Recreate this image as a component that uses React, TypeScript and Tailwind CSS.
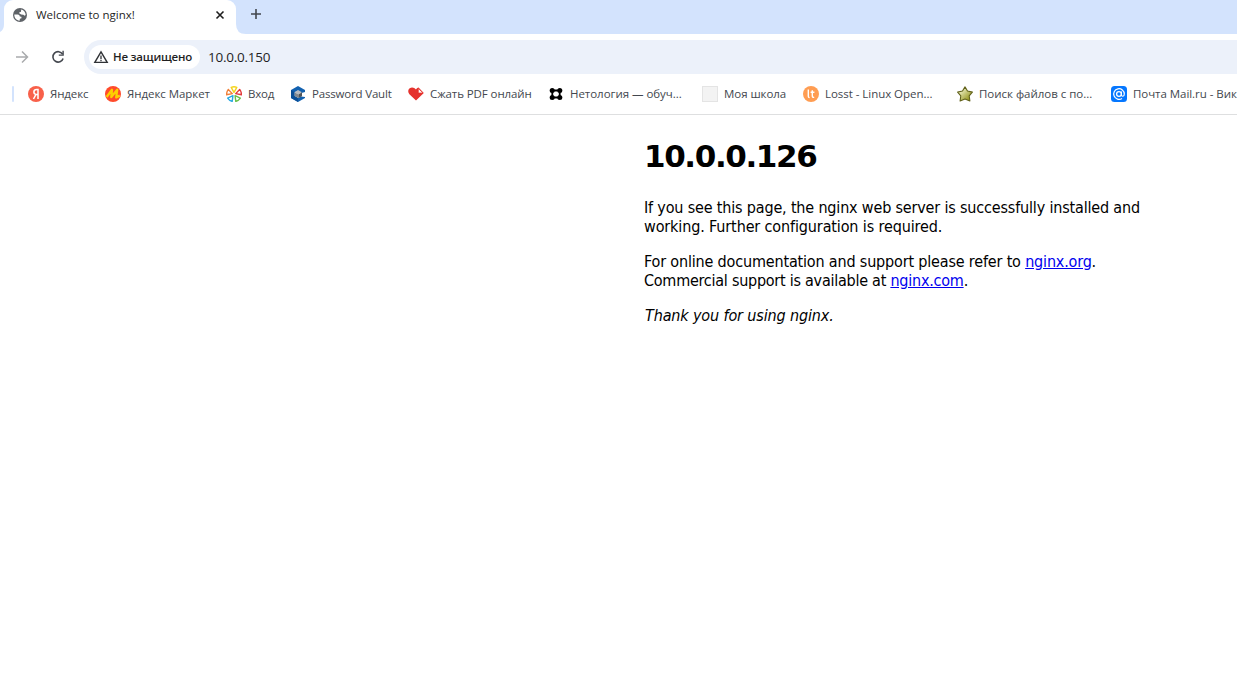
import type { ReactNode } from "react";

function GlobeIcon() {
  return (
    <svg viewBox="0 0 16 16" className="h-4 w-4 shrink-0">
      <circle cx="8" cy="8" r="7" fill="#5f6368" />
      <path d="M8.8 2.4 C11.6 2.7 13.6 5 13.7 8 L12.6 8.8 L11.4 7.7 L9.2 7.6 L7.4 6.6 L7.3 5.3 L8.8 4.9 L9.2 3.7 Z" fill="#fff" />
      <path d="M2.3 7.6 L5.6 7.6 C7 7.7 7.7 8.4 7.8 9.6 L9.4 9.8 L9.5 11.2 L7.9 11.7 L7.6 13.7 C4.4 13.6 2.2 11 2.3 7.6 Z" fill="#fff" />
    </svg>
  );
}

function YandexIcon() {
  return (
    <svg viewBox="0 0 16 16" className="h-4 w-4">
      <circle cx="8" cy="8" r="8" fill="#f8604a" />
      <path d="M10 13 V3.5 H8.6 C6.9 3.5 5.9 4.5 5.9 6 C5.9 7.4 6.7 8.2 8.2 8.4 H10 M8 8.4 L5.5 13" fill="none" stroke="#fff" strokeWidth="1.5" />
    </svg>
  );
}

function MarketIcon() {
  return (
    <svg viewBox="0 0 16 16" className="h-4 w-4">
      <circle cx="8" cy="8" r="8" fill="#ff4b2b" />
      <path d="M1.6 11 L7 3.8 L6.3 11 L12.2 3.8 L11.2 11.4 L14.8 9.6" fill="none" stroke="#fdd000" strokeWidth="2.3" strokeLinejoin="round" />
    </svg>
  );
}

const PETALS: [number, string][] = [
  [0, "#f5d31c"],
  [72, "#e23b3b"],
  [144, "#6cc04a"],
  [216, "#29a9e0"],
  [288, "#f0803a"],
];

function PetalsIcon() {
  return (
    <svg viewBox="0 0 16 16" className="h-4 w-4">
      {PETALS.map(([angle, color]) => (
        <path key={angle} d="M8 6.4 L5.2 1.3 Q8 0.3 10.8 1.3 Z" fill="none" stroke={color} strokeWidth="1.4" strokeLinejoin="round" transform={`rotate(${angle} 8 8.2)`} />
      ))}
    </svg>
  );
}

function VaultIcon() {
  return (
    <svg viewBox="0 0 16 16" className="h-4 w-4">
      <path d="M8 0 L15 4 V6 L11.5 7 L8 4.8 L4.5 6.3 V10 L8 12 L11 10.5 L15 11 V12 L8 16 L1 12 V4 Z" fill="#1261b0" />
      <path d="M1 4 L4.5 6.3 V10 L8 12 V16 L1 12 Z" fill="#0b4f96" />
      <path d="M8 4 L12 6.2 L8.4 8.4 L4.6 6.2 Z" fill="#b5bac0" />
      <path d="M4.6 6.2 L8.4 8.4 V12 L4.6 10 Z" fill="#82898f" />
      <path d="M12 6.2 L8.4 8.4 V12 L12 10.2 Z" fill="#50565c" />
    </svg>
  );
}

function HeartIcon() {
  return (
    <svg viewBox="0 0 16 16" className="h-4 w-4">
      <path d="M8 14.5 L1.4 8.2 C-0.4 6.2 0 3.4 1.8 2.2 C3.8 1 6.4 1.5 8 3.6 C8.7 2.4 9.4 1.8 10.6 1.5 L15.8 7 Z" fill="#e5322d" />
      <path d="M10.3 2.4 V7 H14.9 Z" fill="#fff" stroke="#e5322d" strokeWidth="0.7" />
    </svg>
  );
}

function NetologyIcon() {
  return (
    <svg viewBox="0 0 16 16" className="h-4 w-4">
      <path d="M4.3 4.5 H11.7 V11.5 H4.3 Z" fill="#fff" stroke="#000" strokeWidth="1.8" />
      <circle cx="4.2" cy="4.5" r="2.5" />
      <circle cx="11.8" cy="4.5" r="2.5" />
      <circle cx="4.2" cy="11.5" r="2.5" />
      <circle cx="11.8" cy="11.5" r="2.5" />
    </svg>
  );
}

function LosstIcon() {
  return (
    <svg viewBox="0 0 16 16" className="h-4 w-4">
      <circle cx="8" cy="8" r="8" fill="#ff9d52" />
      <path d="M5.3 3.4 V10.2 Q5.3 11.6 6.6 11.6 M9.3 4.2 V10 Q9.3 11.6 11.2 11.4 M7.6 6.3 H11.4" fill="none" stroke="#fff" strokeWidth="1.4" />
    </svg>
  );
}

function StarIcon() {
  return (
    <svg viewBox="0 0 16 16" className="h-4 w-4">
      <defs>
        <linearGradient id="star" x1="0" y1="0" x2="1" y2="1">
          <stop offset="0.2" stopColor="#eff0c4" />
          <stop offset="0.9" stopColor="#8c8c10" />
        </linearGradient>
      </defs>
      <path d="M8 0.9 L10.5 5 L15.4 6.1 L12.2 9.8 L12.9 15 L8 13.1 L3.1 15 L3.8 9.8 L0.6 6.1 L5.5 5 Z" fill="url(#star)" stroke="#62621c" strokeWidth="1.1" strokeLinejoin="round" />
    </svg>
  );
}

function MailIcon() {
  return (
    <svg viewBox="0 0 16 16" className="h-4 w-4">
      <rect width="16" height="16" rx="3.5" fill="#0577ff" />
      <circle cx="8" cy="8" r="2.4" fill="none" stroke="#fff" strokeWidth="1.3" />
      <path d="M10.4 5.6 V8.7 C10.4 10.9 13.3 10.8 13.3 8 A5.3 5.3 0 1 0 11 12.4" fill="none" stroke="#fff" strokeWidth="1.2" />
    </svg>
  );
}

function Bookmark({ icon, className, children }: { icon: ReactNode; className: string; children: ReactNode }) {
  return (
    <div className={`flex shrink-0 items-center gap-1.5 whitespace-nowrap ${className}`}>
      {icon}
      <span>{children}</span>
    </div>
  );
}

function TabStrip() {
  return (
    <div className="flex h-[34px] bg-[#d3e3fd]">
      <svg viewBox="0 0 4 34" className="h-[34px] w-1 shrink-0">
        <path d="M4 24 Q4 30 0 32 V34 H4 Z" fill="#fff" />
      </svg>
      <div className="flex h-[34px] w-[232px] items-center rounded-t-[9px] bg-white pr-[10px] pb-[5px] pl-2">
        <GlobeIcon />
        <span className="ml-2 grow text-[11.5px] text-[#1f1f1f]">Welcome to nginx!</span>
        <svg viewBox="0 0 12 12" className="h-3 w-3">
          <path d="M2.5 2.5 L9.5 9.5 M9.5 2.5 L2.5 9.5" stroke="#1f1f1f" strokeWidth="1.6" />
        </svg>
      </div>
      <svg viewBox="0 0 10 34" className="h-[34px] w-2.5">
        <path d="M0 24 Q0 34 10 34 H0 Z" fill="#fff" />
      </svg>
      <svg viewBox="0 0 12 12" className="mt-2 ml-1 h-3 w-3">
        <path d="M6 1 V11 M1 6 H11" stroke="#43474e" strokeWidth="1.6" />
      </svg>
    </div>
  );
}

function Toolbar() {
  return (
    <div className="flex h-10 items-center pt-1.5">
      <svg viewBox="0 0 14 14" className="ml-[15px] h-3.5 w-3.5 shrink-0">
        <path d="M1 7 H12.5 M7 1.5 L12.5 7 L7 12.5" fill="none" stroke="#a9abad" strokeWidth="1.5" />
      </svg>
      <svg viewBox="0 0 14 14" className="ml-[22px] h-3.5 w-3.5 shrink-0">
        <path d="M11.6 4.2 A5.2 5.2 0 1 0 12.1 8.4" fill="none" stroke="#43474e" strokeWidth="1.6" />
        <path d="M12.8 0.8 V5.8 H7.8 V4.4 H11.4 V0.8 Z" fill="#43474e" />
      </svg>
      <div className="ml-[19px] flex h-[34px] grow items-center rounded-l-full bg-[#ecf1fa] pl-[5px]">
        <div className="flex h-6 w-[111px] shrink-0 items-center rounded-full bg-white pl-1">
          <svg viewBox="0 0 16 14" className="h-3.5 w-4 shrink-0">
            <path d="M8 1.8 L14.2 12.4 H1.8 Z" fill="none" stroke="#303236" strokeWidth="1.4" />
            <path d="M8 5.4 V8.9 M8 9.8 V11.2" stroke="#303236" strokeWidth="1.3" />
          </svg>
          <span className="ml-1 text-[11.5px] font-semibold tracking-[-0.22px] whitespace-nowrap text-[#1f1f1f]">Не защищено</span>
        </div>
        <span className="ml-2 pt-px text-[13.5px] tracking-[-0.25px] text-[#1f1f1f]">10.0.0.150</span>
      </div>
    </div>
  );
}

function BookmarksBar() {
  return (
    <div className="flex h-[41px] items-center overflow-hidden border-b border-[#dedfe0] pl-3 text-[11.5px] text-[#43474e]">
      <div className="mr-3.5 h-4 w-0.5 shrink-0 rounded-full bg-[#d3e3fd]" />
      <Bookmark className="w-[77px] tracking-[-0.12px]" icon={<YandexIcon />}>Яндекс</Bookmark>
      <Bookmark className="w-[121px] tracking-[-0.05px]" icon={<MarketIcon />}>Яндекс Маркет</Bookmark>
      <Bookmark className="w-16 tracking-[-0.2px]" icon={<PetalsIcon />}>Вход</Bookmark>
      <Bookmark className="w-[118px] tracking-[-0.18px]" icon={<VaultIcon />}>Password Vault</Bookmark>
      <Bookmark className="w-[140px] tracking-[-0.09px]" icon={<HeartIcon />}>Сжать PDF онлайн</Bookmark>
      <Bookmark className="w-[154px] tracking-[-0.04px]" icon={<NetologyIcon />}>Нетология — обуч...</Bookmark>
      <Bookmark className="w-[101px] tracking-[-0.06px]" icon={<div className="h-4 w-4 border border-[#e4e4e4] bg-[#f3f3f3]" />}>Моя школа</Bookmark>
      <Bookmark className="w-[154px] tracking-[-0.04px]" icon={<LosstIcon />}>Losst - Linux Open...</Bookmark>
      <Bookmark className="w-[154px] tracking-[-0.02px]" icon={<StarIcon />}>Поиск файлов с по...</Bookmark>
      <Bookmark className="tracking-[-0.05px]" icon={<MailIcon />}>Почта Mail.ru - Вик</Bookmark>
    </div>
  );
}

export default function App() {
  return (
    <div className="h-[697px] w-[1237px] overflow-hidden bg-white font-['Open_Sans',sans-serif]">
      <TabStrip />
      <Toolbar />
      <BookmarksBar />
      <main className="pt-[22px] pl-[644px] font-['DejaVu_Sans_Condensed','DejaVu_Sans',sans-serif] text-base leading-[19px] whitespace-nowrap text-black">
        <h1 className="font-['DejaVu_Sans',sans-serif] text-[31px] leading-[39px] font-bold tracking-[-1.4px]">10.0.0.126</h1>
        <p className="mt-[22px]">
          <span className="tracking-[-0.17px]">If you see this page, the nginx web server is successfully installed and</span>
          <br />
          <span className="tracking-[-0.13px]">working. Further configuration is required.</span>
        </p>
        <p className="mt-4">
          <span className="tracking-[-0.17px]">For online documentation and support please refer to </span>
          <a href="#org" className="tracking-[-0.18px] text-[#0000ee] underline">nginx.org</a>.
          <br />
          <span className="tracking-[-0.25px]">Commercial support is available at </span>
          <a href="#com" className="tracking-[-0.22px] text-[#0000ee] underline">nginx.com</a>.
        </p>
        <p className="mt-4 pl-px tracking-[-0.13px] italic">Thank you for using nginx.</p>
      </main>
    </div>
  );
}
